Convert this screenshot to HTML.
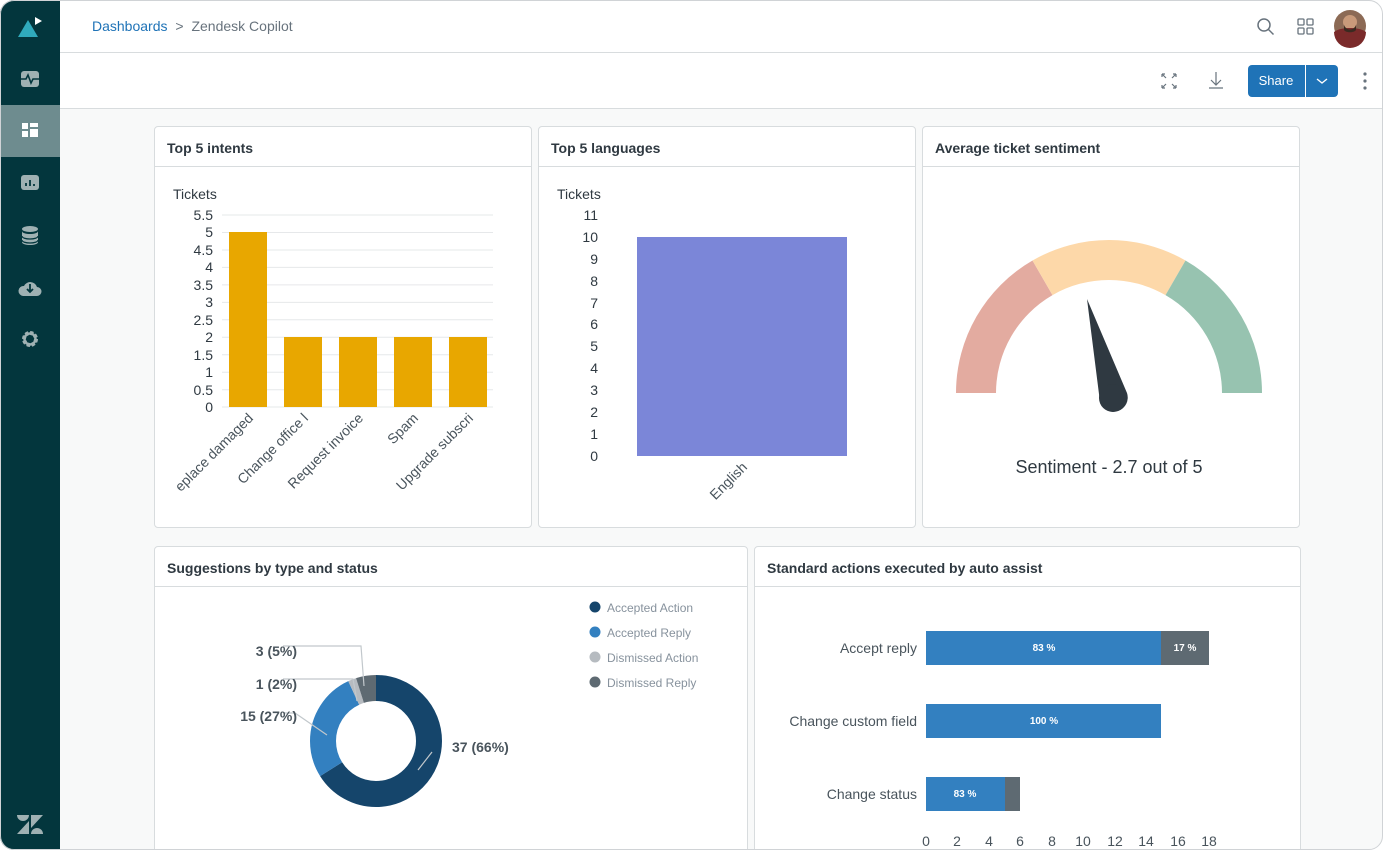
<!DOCTYPE html>
<html><head><meta charset="utf-8"><style>
*{box-sizing:border-box;margin:0;padding:0}
body{width:1383px;height:850px;overflow:hidden;background:#fff;font-family:"Liberation Sans",sans-serif;position:relative;color:#2f3941}
.frame{position:absolute;left:0;top:0;width:1383px;height:850px;border-radius:14px;overflow:hidden;background:#f8f9f9}
.bord{position:absolute;left:0;top:0;width:1383px;height:850px;border:1px solid #d0d3d6;border-radius:14px;pointer-events:none}
.side{position:absolute;left:0;top:0;width:60px;height:850px;background:#03363d}
.act{position:absolute;left:0;top:105px;width:60px;height:52px;background:#6e8c8f}
.top{position:absolute;left:60px;top:0;right:0;height:53px;background:#fff;border-bottom:1px solid #d8dcde}
.tool{position:absolute;left:60px;top:53px;right:0;height:56px;background:#fff;border-bottom:1px solid #d8dcde}
.card{position:absolute;background:#fff;border:1px solid #d8dcde;border-radius:4px;overflow:hidden}
.card h3{height:40px;border-bottom:1px solid #d8dcde;font-size:14px;font-weight:bold;padding:13px 12px;color:#2f3941}
svg text{font-family:"Liberation Sans",sans-serif}
</style></head><body><div class="frame">
<div class="side">
 <svg width="60" height="850" style="position:absolute;left:0;top:0">
  <polygon points="18,37 28,20 38,37" fill="#30aabc"/><polygon points="35,17 42,21 35,25" fill="#fff"/>
  <rect x="21" y="71" width="18" height="16" rx="3" fill="#9fb1b3"/><path d="M21 79h5l2-4 3 8 2-4h6" stroke="#03363d" stroke-width="1.6" fill="none"/>
  <rect x="21" y="175" width="18" height="15" rx="3" fill="#9fb1b3"/><path d="M26 186v-3M30 186v-6M34 186v-2" stroke="#03363d" stroke-width="1.8"/>
  <ellipse cx="30" cy="229" rx="8" ry="3" fill="#9fb1b3"/><path d="M22 231v11c0 2 4 3 8 3s8-1 8-3v-11c0 2-4 3-8 3s-8-1-8-3z" fill="#9fb1b3"/><path d="M22 236c0 2 4 3 8 3s8-1 8-3M22 240c0 2 4 3 8 3s8-1 8-3" stroke="#03363d" stroke-width="1.2" fill="none"/>
  <path d="M23 296a5 5 0 0 1 1-10a7 7 0 0 1 13 1a4.5 4.5 0 0 1 0 9z" fill="#9fb1b3"/><path d="M30 284v8M27 289l3 3 3-3" stroke="#03363d" stroke-width="1.8" fill="none"/>
  <circle cx="30" cy="339" r="6" fill="none" stroke="#9fb1b3" stroke-width="4" stroke-dasharray="3 1.7"/><circle cx="30" cy="339" r="5.5" fill="none" stroke="#9fb1b3" stroke-width="2.5"/>
  <path d="M17 815h12a6 6 0 0 1-12 0z" fill="#9fb1b3"/>
  <polygon points="31,815 43,815 31,828" fill="#9fb1b3"/>
  <polygon points="17,834 29,821 29,834" fill="#9fb1b3"/>
  <path d="M31 834a6 6 0 0 1 12 0z" fill="#9fb1b3"/>
 </svg>
 <div class="act"></div>
 <svg width="60" height="60" style="position:absolute;left:0;top:100px"><rect x="22" y="23" width="6" height="6" fill="#fff"/><rect x="30" y="23" width="8" height="4" fill="#fff"/><rect x="22" y="31" width="6" height="6" fill="#fff"/><rect x="30" y="29" width="8" height="8" fill="#fff"/></svg>
</div>
<div class="top">
 <div style="position:absolute;left:32px;top:18px;font-size:14px"><span style="color:#1f73b7">Dashboards</span> <span style="color:#68737d;margin:0 4px">&gt;</span> <span style="color:#68737d">Zendesk Copilot</span></div>
 <svg width="200" height="52" style="position:absolute;right:0;top:0">
  <circle cx="81" cy="25" r="6" fill="none" stroke="#68737d" stroke-width="1.5"/><path d="M85.5 29.5l5 5" stroke="#68737d" stroke-width="1.5"/>
  <g fill="none" stroke="#68737d" stroke-width="1.3"><rect x="115" y="19" width="6" height="6" rx="1"/><rect x="124" y="19" width="6" height="6" rx="1"/><rect x="115" y="28" width="6" height="6" rx="1"/><rect x="124" y="28" width="6" height="6" rx="1"/></g>
  <circle cx="167" cy="26" r="16" fill="#8c6a55"/><circle cx="167" cy="22" r="7" fill="#c99a7a"/><path d="M151 32a16 16 0 0 0 32 0c-4-3-10-4-16-4s-12 1-16 4z" fill="#7a2a2a"/><path d="M161 25c2 6 10 6 12 0v5c-2 3-10 3-12 0z" fill="#3a2a20"/>
 </svg>
</div>
<div class="tool">
 <svg width="260" height="56" style="position:absolute;right:0;top:0">
  <g stroke="#68737d" stroke-width="1.2" fill="none"><path d="M39 21l4 4M39 21h3M39 21v3M53 21l-4 4M53 21h-3M53 21v3M39 35l4-4M39 35h3M39 35v-3M53 35l-4-4M53 35h-3M53 35v-3"/><path d="M93 19v12M88 27l5 5 5-5M86 35h14"/></g>
  <rect x="125" y="12" width="90" height="32" rx="4" fill="#1f73b7"/><line x1="182.5" y1="12" x2="182.5" y2="44" stroke="#fff" stroke-width="1"/>
  <text x="153" y="32" fill="#fff" font-size="13" text-anchor="middle">Share</text>
  <path d="M194 26l5 4 5-4" stroke="#fff" stroke-width="1.4" fill="none"/>
  <circle cx="242" cy="21" r="1.6" fill="#68737d"/><circle cx="242" cy="28" r="1.6" fill="#68737d"/><circle cx="242" cy="35" r="1.6" fill="#68737d"/>
 </svg>
</div>

<div class="card" style="left:154px;top:126px;width:378px;height:402px"><h3>Top 5 intents</h3>
<svg width="378" height="360" style="position:absolute;left:0;top:40px">
 <g transform="translate(-155 -167)">
 <text x="173" y="199" font-size="14" fill="#2f3941">Tickets</text>
 <g stroke="#e6e8ea" stroke-width="1">
 <line x1="222" x2="493" y1="215" y2="215"/><line x1="222" x2="493" y1="232.5" y2="232.5"/><line x1="222" x2="493" y1="250" y2="250"/><line x1="222" x2="493" y1="267.4" y2="267.4"/><line x1="222" x2="493" y1="284.9" y2="284.9"/><line x1="222" x2="493" y1="302.4" y2="302.4"/><line x1="222" x2="493" y1="319.8" y2="319.8"/><line x1="222" x2="493" y1="337.3" y2="337.3"/><line x1="222" x2="493" y1="354.8" y2="354.8"/><line x1="222" x2="493" y1="372.2" y2="372.2"/><line x1="222" x2="493" y1="389.7" y2="389.7"/><line x1="222" x2="493" y1="407" y2="407"/>
 </g>
 <g font-size="14" fill="#2f3941" text-anchor="end">
 <text x="213" y="220">5.5</text><text x="213" y="237">5</text><text x="213" y="255">4.5</text><text x="213" y="272">4</text><text x="213" y="290">3.5</text><text x="213" y="307">3</text><text x="213" y="325">2.5</text><text x="213" y="342">2</text><text x="213" y="360">1.5</text><text x="213" y="377">1</text><text x="213" y="395">0.5</text><text x="213" y="412">0</text>
 </g>
 <g fill="#e8a700"><rect x="229" y="232" width="38" height="175"/><rect x="284" y="337" width="38" height="70"/><rect x="339" y="337" width="38" height="70"/><rect x="394" y="337" width="38" height="70"/><rect x="449" y="337" width="38" height="70"/></g>
 <g font-size="14" fill="#49545c" text-anchor="end">
 <text transform="translate(254 419) rotate(-45)">eplace damaged</text>
 <text transform="translate(309 419) rotate(-45)">Change office l</text>
 <text transform="translate(364 419) rotate(-45)">Request invoice</text>
 <text transform="translate(419 419) rotate(-45)">Spam</text>
 <text transform="translate(474 419) rotate(-45)">Upgrade subscri</text>
 </g></g>
</svg></div>

<div class="card" style="left:538px;top:126px;width:378px;height:402px"><h3>Top 5 languages</h3>
<svg width="378" height="360" style="position:absolute;left:0;top:40px">
 <g transform="translate(-539 -167)">
 <text x="557" y="199" font-size="14" fill="#2f3941">Tickets</text>
 <g font-size="14" fill="#2f3941" text-anchor="end">
 <text x="598" y="220">11</text><text x="598" y="242">10</text><text x="598" y="264">9</text><text x="598" y="286">8</text><text x="598" y="308">7</text><text x="598" y="329">6</text><text x="598" y="351">5</text><text x="598" y="373">4</text><text x="598" y="395">3</text><text x="598" y="417">2</text><text x="598" y="439">1</text><text x="598" y="461">0</text>
 </g>
 <rect x="637" y="237" width="210" height="219" fill="#7b86d8"/>
 <text transform="translate(748 468) rotate(-45)" font-size="14" fill="#49545c" text-anchor="end">English</text>
 </g></svg></div>

<div class="card" style="left:922px;top:126px;width:378px;height:402px"><h3>Average ticket sentiment</h3>
<svg width="378" height="360" style="position:absolute;left:0;top:40px">
 <g transform="translate(-923 -167)">
 <path d="M956 393A153 153 0 0 1 1032.5 260.5L1052.5 295.1A113 113 0 0 0 996 393z" fill="#e3aba0"/>
 <path d="M1032.5 260.5A153 153 0 0 1 1185.5 260.5L1165.5 295.1A113 113 0 0 0 1052.5 295.1z" fill="#fdd8a9"/>
 <path d="M1185.5 260.5A153 153 0 0 1 1262 393L1222 393A113 113 0 0 0 1165.5 295.1z" fill="#97c3b0"/>
 <path d="M1087 299L1127 393A14 14 0 1 1 1100 402z" fill="#2f3941"/>
 <circle cx="1113" cy="398" r="14" fill="#2f3941"/>
 <text x="1109" y="473" font-size="18" fill="#2f3941" text-anchor="middle">Sentiment - 2.7 out of 5</text>
 </g></svg></div>

<div class="card" style="left:154px;top:546px;width:594px;height:320px"><h3>Suggestions by type and status</h3>
<svg width="594" height="280" style="position:absolute;left:0;top:40px">
 <g transform="translate(-155 -587)">
 <circle cx="376" cy="741" r="53" fill="none" stroke="#15456b" stroke-width="26" stroke-dasharray="219.8 333" transform="rotate(-90 376 741)"/>
 <circle cx="376" cy="741" r="53" fill="none" stroke="#3380c0" stroke-width="26" stroke-dasharray="0 219.8 89.9 333" transform="rotate(-90 376 741)"/>
 <circle cx="376" cy="741" r="53" fill="none" stroke="#b6bbc0" stroke-width="26" stroke-dasharray="0 309.7 6.7 333" transform="rotate(-90 376 741)"/>
 <circle cx="376" cy="741" r="53" fill="none" stroke="#5e6a72" stroke-width="26" stroke-dasharray="0 316.4 16.6 333" transform="rotate(-90 376 741)"/>
 <g stroke="#c2c8cc" stroke-width="1.2" fill="none">
 <path d="M283 646h78l3 40"/><path d="M283 679h70l4 22"/><path d="M283 713l12 0 32 22"/><path d="M418 770l14-18"/>
 </g>
 <g font-size="14" font-weight="bold" fill="#49545c">
 <text x="297" y="656" text-anchor="end">3 (5%)</text><text x="297" y="689" text-anchor="end">1 (2%)</text><text x="297" y="721" text-anchor="end">15 (27%)</text><text x="452" y="752">37 (66%)</text>
 </g>
 <circle cx="595" cy="607" r="5.5" fill="#15456b"/><circle cx="595" cy="632" r="5.5" fill="#3380c0"/><circle cx="595" cy="657" r="5.5" fill="#b6bbc0"/><circle cx="595" cy="682" r="5.5" fill="#5e6a72"/>
 <g font-size="12" fill="#87929d"><text x="607" y="612">Accepted Action</text><text x="607" y="637">Accepted Reply</text><text x="607" y="662">Dismissed Action</text><text x="607" y="687">Dismissed Reply</text></g>
 </g></svg></div>

<div class="card" style="left:754px;top:546px;width:547px;height:320px"><h3>Standard actions executed by auto assist</h3>
<svg width="547" height="280" style="position:absolute;left:0;top:40px">
 <g transform="translate(-755 -587)">
 <g font-size="14" fill="#49545c" text-anchor="end"><text x="917" y="653">Accept reply</text><text x="917" y="726">Change custom field</text><text x="917" y="799">Change status</text></g>
 <rect x="926" y="631" width="235" height="34" fill="#3380c0"/><rect x="1161" y="631" width="48" height="34" fill="#5e6a72"/>
 <rect x="926" y="704" width="235" height="34" fill="#3380c0"/>
 <rect x="926" y="777" width="79" height="34" fill="#3380c0"/><rect x="1005" y="777" width="15" height="34" fill="#5e6a72"/>
 <g font-size="10" font-weight="bold" fill="#fff" text-anchor="middle"><text x="1044" y="651">83 %</text><text x="1185" y="651">17 %</text><text x="1044" y="724">100 %</text><text x="965" y="797">83 %</text></g>
 <g font-size="14" fill="#49545c" text-anchor="middle"><text x="926" y="846">0</text><text x="957" y="846">2</text><text x="989" y="846">4</text><text x="1020" y="846">6</text><text x="1052" y="846">8</text><text x="1083" y="846">10</text><text x="1115" y="846">12</text><text x="1146" y="846">14</text><text x="1178" y="846">16</text><text x="1209" y="846">18</text></g>
 </g></svg></div>
</div><div class="bord"></div></body></html>
